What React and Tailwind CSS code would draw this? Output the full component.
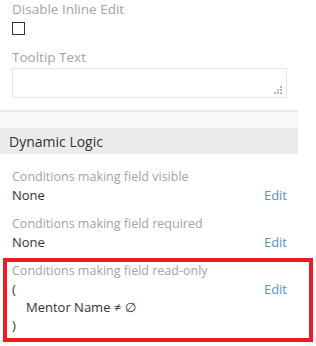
import React from "react";

const FONT = { fontFamily: '"Open Sans", "Liberation Sans", sans-serif' };

function Grip() {
  // textarea resize handle: little triangle of dots
  return (
    <svg width="9" height="9" viewBox="0 0 9 9" className="absolute right-[3px] bottom-[2px]">
      <rect x="6" y="0" width="2" height="2" fill="#b5b5b5" />
      <rect x="3" y="3" width="2" height="2" fill="#b5b5b5" />
      <rect x="6" y="3" width="2" height="2" fill="#b5b5b5" />
      <rect x="0" y="6" width="2" height="2" fill="#b5b5b5" />
      <rect x="3" y="6" width="2" height="2" fill="#b5b5b5" />
      <rect x="6" y="6" width="2" height="2" fill="#b5b5b5" />
    </svg>
  );
}

function LogicRow({ label, children, last }) {
  return (
    <div className={last ? "" : "mb-[11px]"}>
      <div className="text-[12.5px] leading-[18px] text-[#a3a3a3]">{label}</div>
      <div className="flex items-start justify-between text-[13px] leading-[18px]">
        <div className="text-[#333]">{children}</div>
        <a className="text-[#5b8fc5] cursor-pointer">Edit</a>
      </div>
    </div>
  );
}

export default function App() {
  return (
    <div className="relative w-[316px] h-[346px] bg-white overflow-hidden" style={FONT}>
      <div className="w-[298px]">
        {/* field options panel */}
        <div className="pl-3 pb-3 border-b-2 border-[#e8e8e8]">
          <div className="text-[13.5px] leading-[19px] text-[#a3a3a3]">Disable Inline Edit</div>
          <div className="mt-[3px] w-[13px] h-[13px] border border-[#333]" />
          <div className="mt-[14px] text-[13.5px] leading-[16px] text-[#a3a3a3]">Tooltip Text</div>
          <div className="relative mt-[3px] w-[275px] h-[30px] border border-[#e6e6e6]">
            <Grip />
          </div>
        </div>
        <div className="h-4 bg-[#f7f8fa]" />

        {/* dynamic logic panel */}
        <div className="border-b border-[#ececec]">
          <div className="h-[26px] flex items-center pl-[9px] bg-[#ebebeb] text-[14px] text-[#333]">
            Dynamic Logic
          </div>
          <div className="pl-3 pr-[11px] pt-[14px] pb-[7px]">
            <LogicRow label="Conditions making field visible">None</LogicRow>
            <LogicRow label="Conditions making field required">None</LogicRow>
            <LogicRow label="Conditions making field read-only" last>
              <div>(</div>
              <div className="pl-[14px]">Mentor Name ≠ ∅</div>
              <div>)</div>
            </LogicRow>
          </div>
        </div>
      </div>

      {/* red highlight annotation */}
      <div className="absolute left-[3px] top-[258px] w-[310px] h-[84px] border-4 border-[#ed1c24] pointer-events-none" />
    </div>
  );
}
